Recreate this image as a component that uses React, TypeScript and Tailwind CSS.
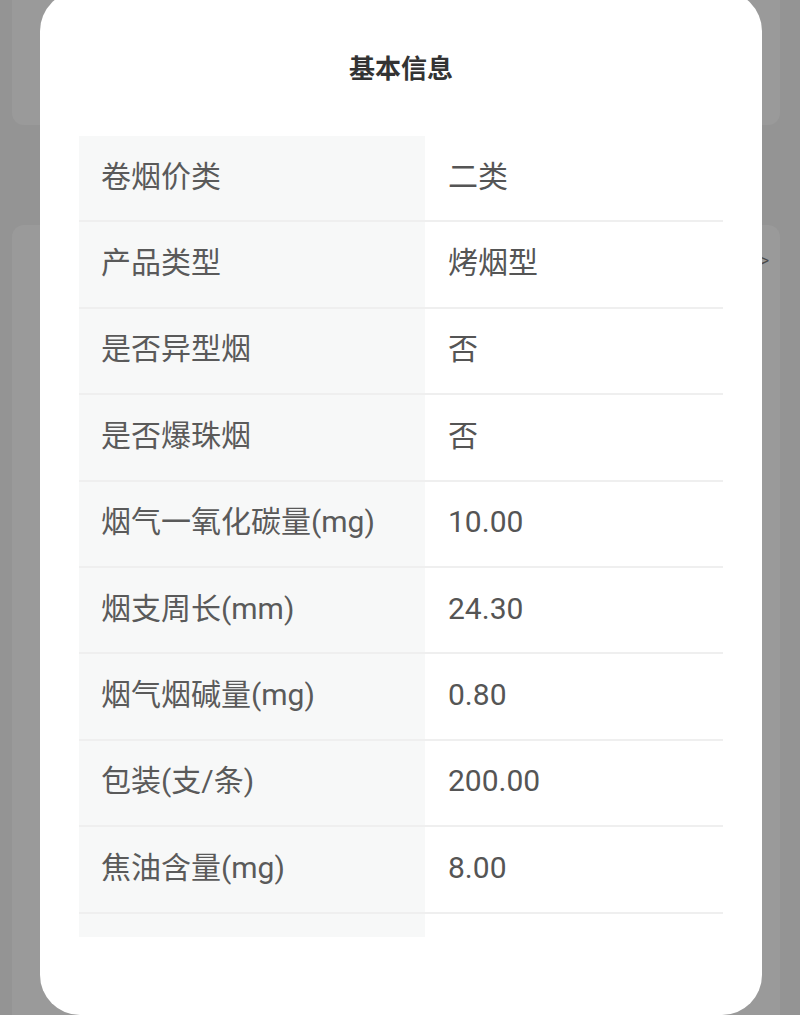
import React from 'react';

const rows: { label: string; value: string }[] = [
  { label: '卷烟价类', value: '二类' },
  { label: '产品类型', value: '烤烟型' },
  { label: '是否异型烟', value: '否' },
  { label: '是否爆珠烟', value: '否' },
  { label: '烟气一氧化碳量(mg)', value: '10.00' },
  { label: '烟支周长(mm)', value: '24.30' },
  { label: '烟气烟碱量(mg)', value: '0.80' },
  { label: '包装(支/条)', value: '200.00' },
  { label: '焦油含量(mg)', value: '8.00' },
];

const font = { fontFamily: 'Roboto, "Noto Sans CJK SC", sans-serif' };

export default function App() {
  return (
    <div className="relative w-[800px] h-[1015px] overflow-hidden bg-[#949494]" style={font}>
      {/* page behind the dimmed overlay */}
      <div className="flex flex-col gap-[100px] px-[12px] pr-[20px]">
        <div className="h-[125px] bg-[#9a9a9a] rounded-b-[12px]" />
        <div className="h-[900px] bg-[#9a9a9a] rounded-[12px] flex justify-end pt-[26px] pr-[11px]">
          <span className="text-[16px] leading-[20px] text-[#4a4a4a]">&gt;</span>
        </div>
      </div>

      {/* modal */}
      <div className="absolute left-[40px] top-[-9px] w-[722px] h-[1024px] rounded-[40px] bg-white px-[39px] pt-[60px]">
        <h2 className="text-center text-[26px] leading-[36px] font-bold text-[#333]">基本信息</h2>
        <div className="mt-[49px] w-[644px]">
          {rows.map((r) => (
            <div key={r.label} className="grid grid-cols-[346px_1fr] h-[86.4px] border-b-2 border-[#efefef]">
              <div className="bg-[#f7f8f8] flex items-center pl-[22px] pb-[3px] text-[30px] text-[#5a5a5a] leading-none">
                {r.label}
              </div>
              <div className="flex items-center pl-[23px] pb-[3px] text-[30px] text-[#555] leading-none">
                {r.value}
              </div>
            </div>
          ))}
          <div className="grid grid-cols-[346px_1fr] h-[23px]">
            <div className="bg-[#f7f8f8]" />
            <div />
          </div>
        </div>
      </div>
    </div>
  );
}
